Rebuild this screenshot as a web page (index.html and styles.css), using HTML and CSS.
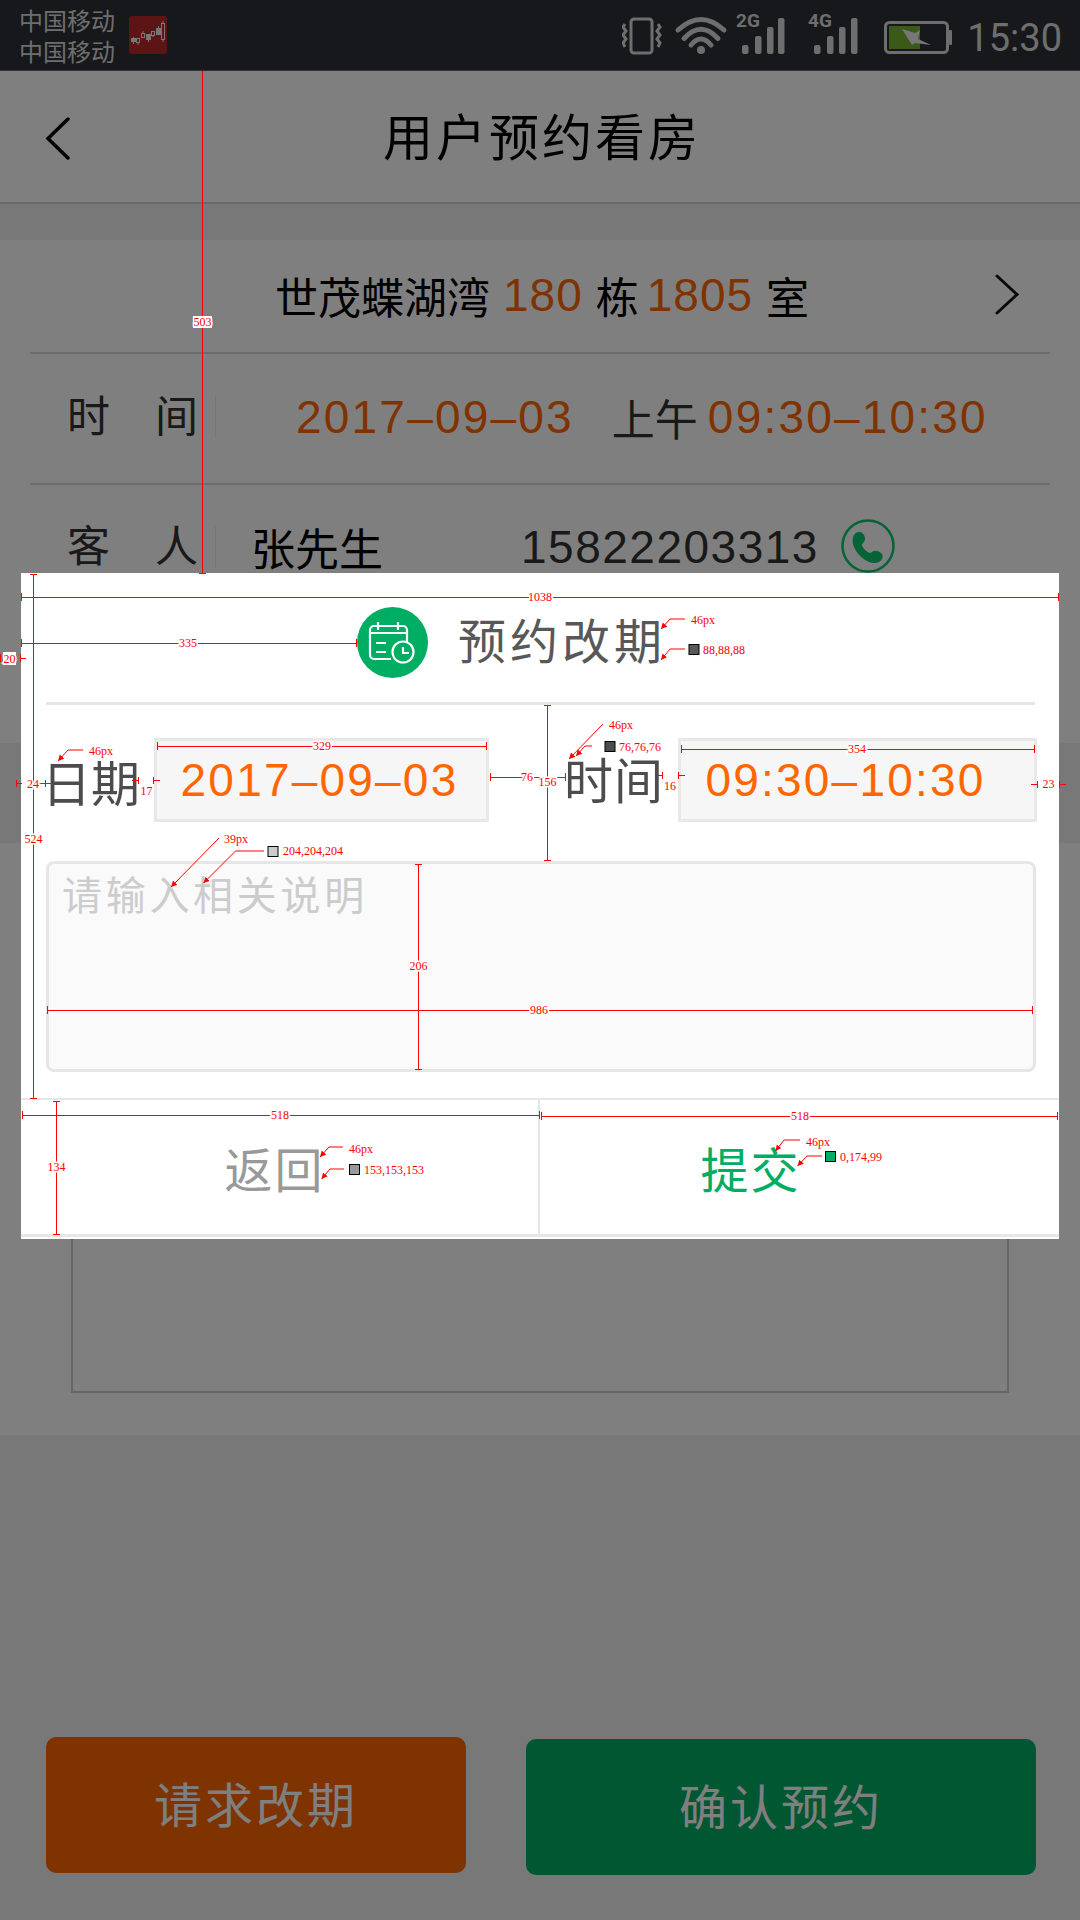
FILE: index.html
```html
<!DOCTYPE html>
<html lang="zh-CN">
<head>
    <meta charset="UTF-8">
    <meta name="viewport" content="width=device-width, initial-scale=1.0">
    <title>用户预约看房</title>
    <link rel="stylesheet" href="styles.css">
</head>
<body>
<div class="page">
    <div class="statusbar">
        <div class="carrier">
            <span>中国移动</span>
            <span>中国移动</span>
        </div>
        <svg class="app-icon" width="38" height="38" viewBox="0 0 38 38">
            <rect width="38" height="38" rx="3" fill="#b82828"/>
            <path d="M4.5 21v7M9 26v3M14 15v2M19.5 24v2M24 19v2M29.5 10v2M34 5v2M34 23v3" stroke="#eeeeee" stroke-width="1"/>
            <rect x="2" y="22" width="5" height="4" fill="#eeeeee"/>
            <rect x="7.5" y="22.5" width="3" height="4" fill="none" stroke="#eeeeee"/>
            <rect x="12.5" y="17.5" width="3" height="4" fill="none" stroke="#eeeeee"/>
            <rect x="17" y="18" width="5" height="6" fill="#eeeeee"/>
            <rect x="22.5" y="15.5" width="3" height="4" fill="none" stroke="#eeeeee"/>
            <rect x="27" y="12" width="5" height="7" fill="#eeeeee"/>
            <rect x="32.5" y="7.5" width="3" height="16" fill="none" stroke="#eeeeee"/>
        </svg>
        <svg class="status-icons" width="330" height="71" viewBox="622 0 330 71">
            <g fill="none" stroke="#dcdcdc">
                <rect x="631" y="19" width="21" height="34" rx="3" stroke-width="3"/>
                <path d="M625 24l-2 3 3 4-3 4 3 4-3 4 2 4M658 24l2 3-3 4 3 4-3 4 3 4-2 4" stroke-width="3"/>
                <path d="M678 30Q701 9 724 30M684 38.5Q701 20 718 38.5M691 45Q701 33 711 45" stroke-width="5" stroke-linecap="round"/>
                <rect x="885.5" y="22.5" width="62" height="30" rx="4" stroke-width="3"/>
            </g>
            <circle cx="701" cy="50" r="4" fill="#dcdcdc"/>
            <text class="net" x="736" y="27">2G</text>
            <text class="net" x="808" y="27">4G</text>
            <g fill="#dcdcdc">
                <rect x="742" y="45" width="6.5" height="9" rx="2"/>
                <rect x="755" y="36" width="6.5" height="18" rx="2"/>
                <rect x="767" y="27" width="6.5" height="27" rx="2"/>
                <rect x="778" y="18" width="6.5" height="36" rx="2"/>
                <rect x="814" y="45" width="6.5" height="9" rx="2"/>
                <rect x="827" y="36" width="6.5" height="18" rx="2"/>
                <rect x="839" y="27" width="6.5" height="27" rx="2"/>
                <rect x="851" y="18" width="6.5" height="36" rx="2"/>
                <rect x="949" y="30" width="3" height="15" rx="1"/>
            </g>
            <rect x="889" y="26" width="31" height="23" fill="#76b430"/>
            <polygon points="902,29 915,33 920,30 918,39 931,45 915,43 912,45" fill="#eeeeee"/>
        </svg>
        <span class="clock">15:30</span>
    </div>

    <div class="navbar">
        <svg class="back" width="26" height="44" viewBox="0 0 26 44">
            <path d="M23 2L3 21.5 23 41" fill="none" stroke="#000" stroke-width="3.5" stroke-linecap="round"/>
        </svg>
        <h1>用户预约看房</h1>
    </div>

    <div class="info">
        <div class="row row-house">
            <span>世茂蝶湖湾</span>
            <span class="num">180</span>
            <span>栋</span>
            <span class="num num-room">1805</span>
            <span>室</span>
            <svg class="more" width="26" height="44" viewBox="0 0 26 44">
                <path d="M3 3L23 21.5 3 40" fill="none" stroke="#111" stroke-width="3" stroke-linecap="round"/>
            </svg>
        </div>
        <div class="row row-visit">
            <span class="row-label">时　间</span>
            <span class="num visit-date">2017–09–03</span>
            <span class="noon">上午</span>
            <span class="num">09:30–10:30</span>
        </div>
        <div class="row row-guest">
            <span class="row-label">客　人</span>
            <span class="guest-name">张先生</span>
            <span class="guest-phone">15822203313</span>
            <svg class="call" width="56" height="56" viewBox="0 0 56 56">
                <circle cx="28" cy="28" r="25.5" fill="none" stroke="#08c86e" stroke-width="2.5"/>
                <path fill="#08c86e" d="M16 15C19 13 24 14 25 20C25.5 24 22 25 22 27C23 31 27 34 30 35C32 35 33 32 37 33C42 34 44 38 42 41C40 45 34 46 29 44C22 41 15 34 13 26C12 21 13 17 16 15z"/>
            </svg>
        </div>
    </div>

    <div class="house-card">
        <div class="house-box"></div>
    </div>

    <div class="actions">
        <div class="btn btn-orange">请求改期</div>
        <div class="btn btn-green">确认预约</div>
    </div>

    <div class="mask"></div>

    <div class="modal">
        <div class="modal-head">
            <svg width="71" height="71" viewBox="0 0 71 71">
                <circle cx="35.5" cy="35.5" r="35.5" fill="#00ae63"/>
                <g fill="none" stroke="#fff" stroke-width="2.2">
                    <path d="M50 35V23a4 4 0 0 0-4-4H17a4 4 0 0 0-4 4V48a4 4 0 0 0 4 4H34"/>
                    <path d="M13 26H50M21 15v8M41 15v8M19 36H29M19 45H29"/>
                    <circle cx="46" cy="45" r="10.5"/>
                    <path d="M46 40v6h6"/>
                </g>
            </svg>
            <h2>预约改期</h2>
        </div>
        <div class="modal-line"></div>
        <div class="modal-form">
            <label class="label-date">日期</label>
            <div class="field field-date">2017–09–03</div>
            <label class="label-time">时间</label>
            <div class="field field-time">09:30–10:30</div>
        </div>
        <div class="note">请输入相关说明</div>
        <div class="modal-foot">
            <div class="foot-btn foot-back">返回</div>
            <div class="foot-btn foot-submit">提交</div>
        </div>
    </div>

    <svg class="marks" width="1080" height="1920" viewBox="0 0 1080 1920">
        <defs>
            <marker id="arrow" markerWidth="7" markerHeight="7" refX="6" refY="3" orient="auto">
                <path d="M0 0L6 3 0 6z" fill="#f00"/>
            </marker>
        </defs>

        <!-- medidas -->
        <g class="rule">
            <path d="M202.5 71V573M199 573.5H206"/>
            <path d="M21.5 593V601M21.5 597.5H1058.5M1058.5 593V601"/>
            <path d="M33.5 574V834M33.5 844V1098M30 574.5H37M30 1098.5H37"/>
            <path d="M0.5 654V662M20.5 654V662M20.5 658.5H26"/>
            <path d="M21.5 639V647M21.5 643.5H356.5M356.5 639V647"/>
            <path d="M16 783.5H22M16.5 780V787M39 783.5H51M45.5 780V787"/>
            <path d="M132 780.5H138M138.5 777V784M153.5 777V784M153.5 780.5H160"/>
            <path d="M157.5 742V750M157.5 746.5H486.5M486.5 742V750"/>
            <path d="M490.5 773V781M490.5 777.5H565.5M565.5 773V781"/>
            <path d="M547.5 705V860M544 705.5H551M544 860.5H551"/>
            <path d="M657 775.5H663M662.5 772V779M678.5 772V779M678.5 775.5H685"/>
            <path d="M681.5 745V753M681.5 749.5H1034.5M1034.5 745V753"/>
            <path d="M1031 784.5H1037M1037.5 781V788M1059.5 781V788M1059.5 784.5H1066"/>
            <path d="M418.5 864V1069M415 864.5H422M415 1069.5H422"/>
            <path d="M47.5 1006V1014M47.5 1010.5H1032.5M1032.5 1006V1014"/>
            <path d="M56.5 1101V1234M53 1101.5H60M53 1234.5H60"/>
            <path d="M22.5 1111V1119M22.5 1115.5H539.5M539.5 1111V1119"/>
            <path d="M541.5 1112V1120M541.5 1116.5H1057.5M1057.5 1112V1120"/>
        </g>

        <!-- flechas -->
        <g class="leader">
            <path marker-end="url(#arrow)" d="M685 619H670L661 629"/>
            <path marker-end="url(#arrow)" d="M685 649H670L661 660"/>
            <path marker-end="url(#arrow)" d="M83 750H68L58 761"/>
            <path marker-end="url(#arrow)" d="M603 724L569 759"/>
            <path marker-end="url(#arrow)" d="M592 746H585L576 756"/>
            <path marker-end="url(#arrow)" d="M219 838L171 887"/>
            <path marker-end="url(#arrow)" d="M264 851H235.5L203.5 883"/>
            <path marker-end="url(#arrow)" d="M343 1147H329L320 1157"/>
            <path marker-end="url(#arrow)" d="M344 1169H330L321.5 1179"/>
            <path marker-end="url(#arrow)" d="M800 1140H784L775.5 1151"/>
            <path marker-end="url(#arrow)" d="M822 1156H807L797.5 1166"/>
        </g>

        <rect class="swatch" x="689" y="644.5" width="10" height="10" fill="#585858"/>
        <rect class="swatch" x="605" y="741.5" width="10" height="10" fill="#4c4c4c"/>
        <rect class="swatch" x="268" y="846.5" width="10" height="10" fill="#cccccc"/>
        <rect class="swatch" x="349.5" y="1164.5" width="10" height="10" fill="#999999"/>
        <rect class="swatch" x="825.5" y="1151.5" width="10" height="10" fill="#00ae63"/>

        <rect x="193" y="316" width="19" height="12" fill="#fff"/>
        <rect x="3" y="652" width="13" height="13" fill="#fff"/>

        <g class="tag">
            <text x="202.5" y="326">503</text>
            <text x="540" y="601">1038</text>
            <text x="33.5" y="843">524</text>
            <text x="9.5" y="663">20</text>
            <text x="188" y="647">335</text>
            <text x="33" y="788">24</text>
            <text x="146.5" y="795">17</text>
            <text x="322" y="750">329</text>
            <text x="527" y="781">76</text>
            <text x="547.5" y="786">156</text>
            <text x="670" y="790">16</text>
            <text x="857" y="753">354</text>
            <text x="1048.5" y="788">23</text>
            <text x="418.5" y="970">206</text>
            <text x="539" y="1014">986</text>
            <text x="56.5" y="1171">134</text>
            <text x="280" y="1119">518</text>
            <text x="800" y="1120">518</text>
        </g>
        <g class="note-tag">
            <text x="691" y="624">46px</text>
            <text x="703" y="654">88,88,88</text>
            <text x="89" y="755">46px</text>
            <text x="609" y="729">46px</text>
            <text x="619" y="751">76,76,76</text>
            <text x="224" y="843">39px</text>
            <text x="283" y="855">204,204,204</text>
            <text x="349" y="1153">46px</text>
            <text x="364" y="1174">153,153,153</text>
            <text x="806" y="1146">46px</text>
            <text x="840" y="1161">0,174,99</text>
        </g>
    </svg>
</div>
</body>
</html>
```

FILE: styles.css
```css
* {
    box-sizing: border-box;
}
body {
    margin: 0;
    font-family: "Liberation Sans", "Noto Sans CJK SC", sans-serif;
}
h1, h2 {
    margin: 0;
    font-weight: normal;
}
.page {
    position: relative;
    width: 1080px;
    height: 1920px;
    overflow: hidden;
    display: flex;
    flex-direction: column;
    background-color: #f0f0f0;
}

/* barra de estado */
.statusbar {
    height: 71px;
    display: flex;
    align-items: center;
    padding: 0 18px 0 19px;
    background-color: #2d3036;
    border-bottom: 1px solid #666;
}
.carrier {
    display: flex;
    flex-direction: column;
    padding-top: 3px;
    font-size: 24px;
    line-height: 31px;
    color: #dcdcdc;
}
.app-icon {
    margin-left: 14px;
}
.status-icons {
    margin-left: auto;
}
.net {
    font-family: Roboto, sans-serif;
    font-size: 19px;
    font-weight: bold;
    fill: #dcdcdc;
}
.clock {
    margin-left: 15px;
    padding-top: 5px;
    font-family: Roboto, sans-serif;
    font-size: 38px;
    color: #dcdcdc;
}

/* cabecera */
.navbar {
    height: 133px;
    display: grid;
    grid-template-columns: 1fr auto 1fr;
    align-items: center;
    padding-left: 45px;
    padding-right: 45px;
    background-color: #fff;
    border-bottom: 2px solid #d2d2d2;
}
.navbar h1 {
    padding-left: 4px;
    padding-bottom: 6px;
    font-size: 50px;
    letter-spacing: 3px;
    color: #000;
}
.back {
    margin-top: 4px;
}

/* datos de la cita */
.info {
    margin-top: 36px;
    height: 503px;
    padding: 0 30px;
    background-color: #fff;
}
.row {
    display: flex;
    align-items: center;
    height: 131px;
    border-bottom: 2px solid #d8d8d8;
    font-size: 43px;
    color: #333;
}
.row-house {
    height: 114px;
    padding-left: 245px;
    padding-bottom: 2px;
    gap: 13px;
    color: #000;
}
.row-house .more {
    margin-left: auto;
    margin-right: 30px;
}
.row-visit {
    padding-bottom: 4px;
}
.row-guest {
    height: 116px;
    padding-top: 7px;
    border-bottom: none;
}
.row-label {
    width: 186px;
    padding-left: 37px;
    line-height: 42px;
    letter-spacing: 1px;
    white-space: nowrap;
    border-right: 1px solid #ececec;
}
.num {
    font-size: 46px;
    letter-spacing: 2.2px;
    color: #ff6600;
}
.row-house .num {
    letter-spacing: 1px;
}
.row-house .num-room {
    margin-left: -5px;
}
.visit-date {
    margin-left: 80px;
}
.noon {
    margin-left: 38px;
    margin-right: 10px;
}
.guest-name {
    margin-left: 35px;
    font-size: 44px;
    color: #000;
}
.guest-phone {
    margin-left: 138px;
    font-size: 46px;
    letter-spacing: 1.5px;
}
.call {
    margin-left: 21px;
    margin-top: -2px;
}

.house-card {
    margin-top: 100px;
    height: 592px;
    display: flex;
    align-items: flex-end;
    padding: 0 71px 42px 71px;
    background-color: #fff;
}
.house-box {
    width: 100%;
    height: 400px;
    border: 2px solid #ccc;
}

.actions {
    display: flex;
    padding: 302px 44px 0 46px;
    gap: 60px;
}
.btn {
    display: flex;
    align-items: center;
    justify-content: center;
    height: 136px;
    padding-bottom: 6px;
    border-radius: 10px;
    font-size: 48px;
    letter-spacing: 3px;
    color: #fff;
}
.btn-orange {
    width: 420px;
    background-color: #ff6600;
}
.btn-green {
    width: 510px;
    margin-top: 2px;
    background-color: #00ae63;
}

.mask {
    position: absolute;
    top: 0;
    left: 0;
    right: 0;
    bottom: 0;
    background-color: rgba(0, 0, 0, 0.5);
}

/* ventana de cambio de cita */
.modal {
    position: absolute;
    top: 573px;
    left: 21px;
    width: 1038px;
    height: 666px;
    background-color: #fff;
}
.modal-head {
    display: flex;
    align-items: center;
    gap: 30px;
    height: 129px;
    padding: 10px 0 0 336px;
}
.modal-head h2 {
    font-size: 48px;
    line-height: 1;
    letter-spacing: 4px;
    color: #585858;
}
.modal-line {
    height: 3px;
    margin: 0 24px 0 25px;
    background-color: #e6e6e6;
}
.modal-form {
    display: flex;
    align-items: center;
    margin-top: 33px;
    padding-left: 21px;
}
.modal-form label {
    font-size: 49px;
    color: #4c4c4c;
}
.label-date {
    width: 112px;
}
.label-time {
    width: 114px;
    margin-left: 75px;
    padding-bottom: 6px;
    letter-spacing: 1px;
}
.field {
    display: flex;
    align-items: center;
    justify-content: center;
    height: 84px;
    font-size: 46px;
    letter-spacing: 2.2px;
    color: #ff6600;
    background-color: #f6f6f6;
    border: 3px solid #e8e8e8;
}
.field-date {
    width: 335px;
    padding-right: 4px;
}
.field-time {
    width: 359px;
    padding-right: 24px;
}
.note {
    height: 211px;
    margin: 39px 23px 0 25px;
    padding: 0 13px;
    font-size: 40px;
    letter-spacing: 3.7px;
    color: #ccc;
    background-color: #fafafa;
    border: 3px solid #e6e6e6;
    border-radius: 8px;
}
.modal-foot {
    display: flex;
    height: 139px;
    margin-top: 26px;
    border-top: 2px solid #e6e6e6;
    border-bottom: 3px solid #e6e6e6;
}
.foot-btn {
    width: 50%;
    display: flex;
    align-items: center;
    justify-content: center;
    font-size: 48px;
    letter-spacing: 2px;
}
.foot-back {
    padding-right: 10px;
    color: #999;
    border-right: 2px solid #e6e6e6;
}
.foot-submit {
    padding-right: 98px;
    color: #00ae63;
}

/* anotaciones de medidas */
.marks {
    position: absolute;
    top: 0;
    left: 0;
}
.rule path {
    fill: none;
    stroke: #f00;
    stroke-width: 1;
    shape-rendering: crispEdges;
}
.leader path {
    fill: none;
    stroke: #f00;
    stroke-width: 1;
}
.swatch {
    stroke: #000;
    stroke-width: 1;
}
.tag text,
.note-tag text {
    font-family: "Liberation Serif", serif;
    font-size: 12px;
    fill: #f00;
}
.tag text {
    text-anchor: middle;
    paint-order: stroke;
    stroke: #fff;
    stroke-width: 3px;
}
```
